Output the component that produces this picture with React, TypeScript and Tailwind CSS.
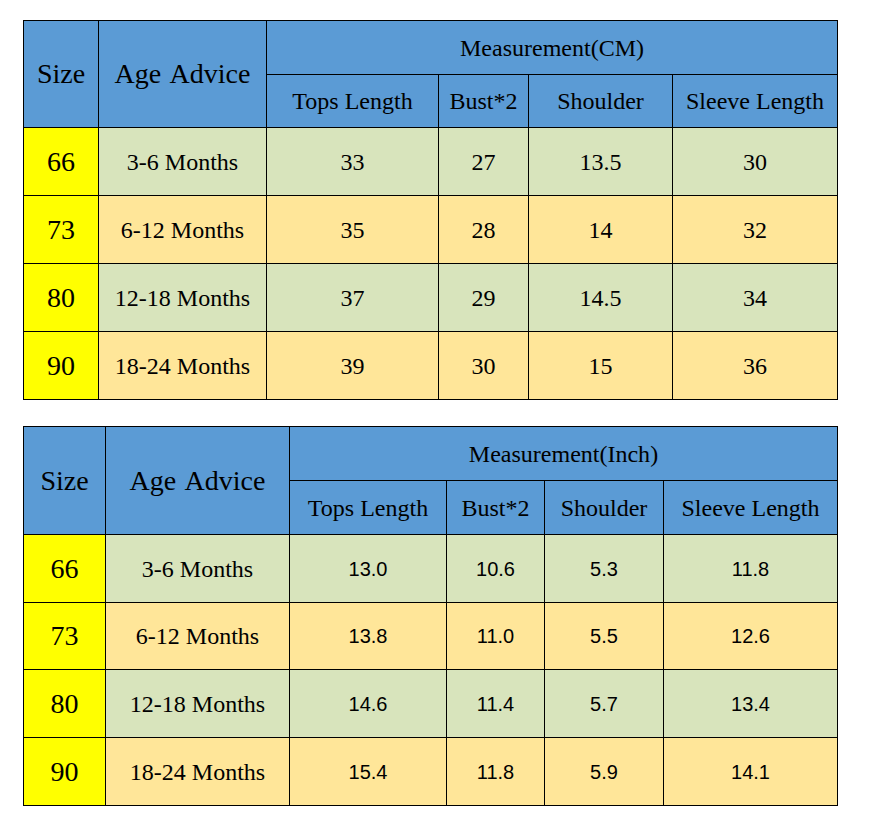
import React from "react";

type TableProps = {
  cols: string;
  unit: string;
  rows: { size: string; age: string; vals: string[] }[];
  sans: boolean;
  h1: string;
  h2: string;
  bodyHeights: string[];
};

const serif = "[font-family:'Liberation_Serif','Times_New_Roman',serif]";
const sansF = "[font-family:'Liberation_Sans',Arial,sans-serif]";

function SizeTable({ cols, unit, rows, sans, h1, h2, bodyHeights }: TableProps) {
  const cell = "flex items-center justify-center border-r border-b border-black text-black leading-none";
  return (
    <div className="ml-[23px] w-[815px] border-l border-t border-black">
      <div className="grid" style={{ gridTemplateColumns: cols }}>
        <div className={`${cell} ${serif} bg-[#5B9BD5] text-[28px] row-span-2`}>Size</div>
        <div className={`${cell} ${serif} bg-[#5B9BD5] text-[28px] row-span-2 [word-spacing:3px]`}>Age Advice</div>
        <div className={`${cell} ${serif} bg-[#5B9BD5] text-[24px] col-span-4 ${h1}`}>Measurement({unit})</div>
        <div className={`${cell} ${serif} bg-[#5B9BD5] text-[24px] ${h2}`}>Tops Length</div>
        <div className={`${cell} ${serif} bg-[#5B9BD5] text-[24px] ${h2}`}>Bust*2</div>
        <div className={`${cell} ${serif} bg-[#5B9BD5] text-[24px] ${h2}`}>Shoulder</div>
        <div className={`${cell} ${serif} bg-[#5B9BD5] text-[24px] ${h2}`}>Sleeve Length</div>
        {rows.map((r, i) => {
          const bg = i % 2 === 0 ? "bg-[#D8E4BC]" : "bg-[#FFE699]";
          const h = bodyHeights[i];
          return (
            <React.Fragment key={r.size}>
              <div className={`${cell} ${serif} bg-[#FFFF00] text-[28px] ${h}`}>{r.size}</div>
              <div className={`${cell} ${serif} ${bg} text-[24px] ${h}`}>{r.age}</div>
              {r.vals.map((v, j) => (
                <div
                  key={j}
                  className={`${cell} ${sans ? `${sansF} text-[20px]` : `${serif} text-[24px]`} ${bg} ${h}`}
                >
                  {v}
                </div>
              ))}
            </React.Fragment>
          );
        })}
      </div>
    </div>
  );
}

export default function App() {
  return (
    <div className="w-[876px] h-[826px] bg-white pt-[20px]">
      <SizeTable
        cols="75px 168px 172px 90px 144px 165px"
        unit="CM"
        sans={false}
        h1="h-[54px]"
        h2="h-[53px]"
        bodyHeights={["h-[68px]", "h-[68px]", "h-[68px]", "h-[68px]"]}
        rows={[
          { size: "66", age: "3-6 Months", vals: ["33", "27", "13.5", "30"] },
          { size: "73", age: "6-12 Months", vals: ["35", "28", "14", "32"] },
          { size: "80", age: "12-18 Months", vals: ["37", "29", "14.5", "34"] },
          { size: "90", age: "18-24 Months", vals: ["39", "30", "15", "36"] },
        ]}
      />
      <div className="h-[26px]" />
      <SizeTable
        cols="82px 184px 157px 98px 119px 174px"
        unit="Inch"
        sans={true}
        h1="h-[54px]"
        h2="h-[54px]"
        bodyHeights={["h-[68px]", "h-[67px]", "h-[68px]", "h-[68px]"]}
        rows={[
          { size: "66", age: "3-6 Months", vals: ["13.0", "10.6", "5.3", "11.8"] },
          { size: "73", age: "6-12 Months", vals: ["13.8", "11.0", "5.5", "12.6"] },
          { size: "80", age: "12-18 Months", vals: ["14.6", "11.4", "5.7", "13.4"] },
          { size: "90", age: "18-24 Months", vals: ["15.4", "11.8", "5.9", "14.1"] },
        ]}
      />
    </div>
  );
}
